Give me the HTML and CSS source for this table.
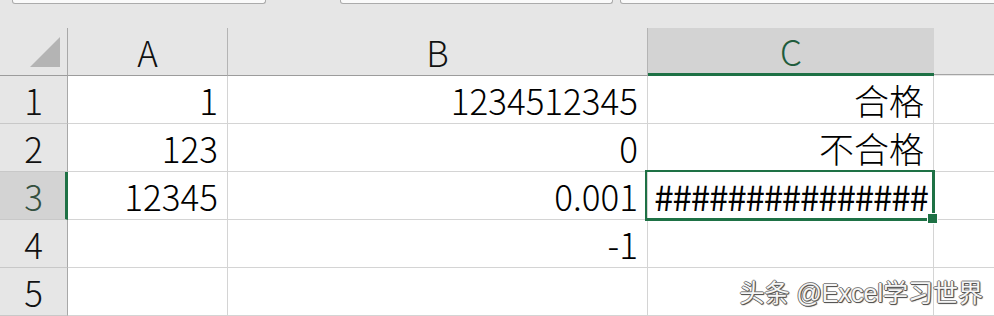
FILE: index.html
```html
<!DOCTYPE html>
<html lang="zh-CN">
<head>
<meta charset="utf-8">
<title>Sheet</title>
<link rel="stylesheet" href="styles.css">
</head>
<body>
<div class="page">
  <div class="band">
    <div class="box box-name"></div>
    <div class="box box-mid"></div>
    <div class="box box-formula"></div>
  </div>
  <div class="sheet">
    <div class="hd corner">
      <svg class="tri" width="30" height="30" viewBox="0 0 30 30"><polygon points="0,30 30,0 30,30" fill="#b4b4b4"/></svg>
    </div>
    <div class="hd col">A</div>
    <div class="hd col">B</div>
    <div class="hd col sel">C</div>
    <div class="hd col rest"></div>

    <div class="rh">1</div>
    <div class="c">1</div>
    <div class="c">1234512345</div>
    <div class="c cjk">合格</div>
    <div class="c rest"></div>

    <div class="rh">2</div>
    <div class="c">123</div>
    <div class="c">0</div>
    <div class="c cjk">不合格</div>
    <div class="c rest"></div>

    <div class="rh sel">3</div>
    <div class="c">12345</div>
    <div class="c">0.001</div>
    <div class="c active"><span class="hash">###############</span></div>
    <div class="c rest"></div>

    <div class="rh">4</div>
    <div class="c"></div>
    <div class="c">-1</div>
    <div class="c"></div>
    <div class="c rest"></div>

    <div class="rh">5</div>
    <div class="c"></div>
    <div class="c"></div>
    <div class="c"></div>
    <div class="c rest"></div>
  </div>
  <div class="mark">头条 @Excel学习世界</div>
</div>
</body>
</html>
```

FILE: styles.css
```css
* { box-sizing: border-box; }
html, body { margin: 0; padding: 0; }
body {
  width: 994px;
  height: 316px;
  overflow: hidden;
  background: #e6e6e6;
  font-family: "Noto Sans CJK SC", sans-serif;
}
.page {
  position: relative;
  width: 994px;
  height: 316px;
  overflow: hidden;
}
.band {
  height: 28px;
  display: flex;
  align-items: flex-start;
  background: #e6e6e6;
}
.box {
  height: 4px;
  background: #fafafa;
  border: 1px solid #ababab;
  border-top: none;
  border-radius: 0 0 3px 3px;
}
.box-name { margin-left: 12px; width: 254px; }
.box-mid { margin-left: 74px; width: 273px; }
.box-formula { margin-left: 7px; flex: 1; margin-right: -6px; }

.sheet {
  display: grid;
  grid-template-columns: 68px 160px 420px 286px 1fr;
  grid-template-rows: 48px repeat(5, 48px);
  font-size: 35px;
  font-weight: 300;
  color: #000;
}
.hd {
  background: #e6e6e6;
  border-bottom: 1px solid #9c9c9c;
  border-right: 1px solid #b4b4b4;
  display: flex;
  align-items: center;
  justify-content: center;
  color: #111;
  line-height: 1;
}
.hd.corner {
  justify-content: flex-end;
  align-items: flex-end;
  padding: 0 7px 8px 0;
  border-right-color: #a8a8a8;
}
.tri { display: block; }
.hd.sel {
  background: #d3d3d3;
  border-bottom: 3px solid #1e7145;
  border-right: none;
  color: #1f5c3c;
}
.hd.rest {
  border-right: none;
  border-bottom: 1px solid #a4a4a4;
  height: 47px;
}
.rh {
  background: #e6e6e6;
  border-right: 1px solid #a8a8a8;
  border-bottom: 1px solid #c8c8c8;
  display: flex;
  align-items: center;
  justify-content: center;
  line-height: 1;
  color: #111;
}
.rh.sel {
  background: #d3d3d3;
  border-right: 3px solid #1e7145;
  color: #34503f;
  padding-left: 2px;
}
.c {
  background: #fff;
  border-right: 1px solid #d4d4d4;
  border-bottom: 1px solid #d4d4d4;
  display: flex;
  align-items: center;
  justify-content: flex-end;
  padding-right: 9px;
  white-space: nowrap;
  line-height: 1;
}
.c.rest { border-right: none; }
.c.active {
  position: relative;
  justify-content: center;
  padding-right: 0;
  overflow: visible;
}
.hash {
  letter-spacing: -1.2px;
  margin-left: 1px;
  font-weight: 400;
}
.c.active::after {
  content: "";
  position: absolute;
  top: -2px;
  left: -3px;
  right: -2px;
  bottom: -2px;
  border: 2px solid #1e7145;
  border-bottom-width: 3px;
  border-right-width: 3px;
  z-index: 1;
}
.c.active::before {
  content: "";
  position: absolute;
  width: 9px;
  height: 9px;
  right: -4px;
  bottom: -4px;
  background: #1e7145;
  box-shadow: 0 0 0 1px #fff;
  z-index: 2;
}
.mark {
  position: absolute;
  right: 11px;
  top: 278px;
  font-family: "Liberation Sans", "Noto Sans CJK SC", sans-serif;
  font-size: 25px;
  line-height: 30px;
  color: #f6f6f6;
  text-shadow: 1px 0 0 #555, -1px 0 0 #777, 0 1px 0 #555, 0 -1px 0 #888, 1px 1px 1px #444;
  white-space: nowrap;
}
```
